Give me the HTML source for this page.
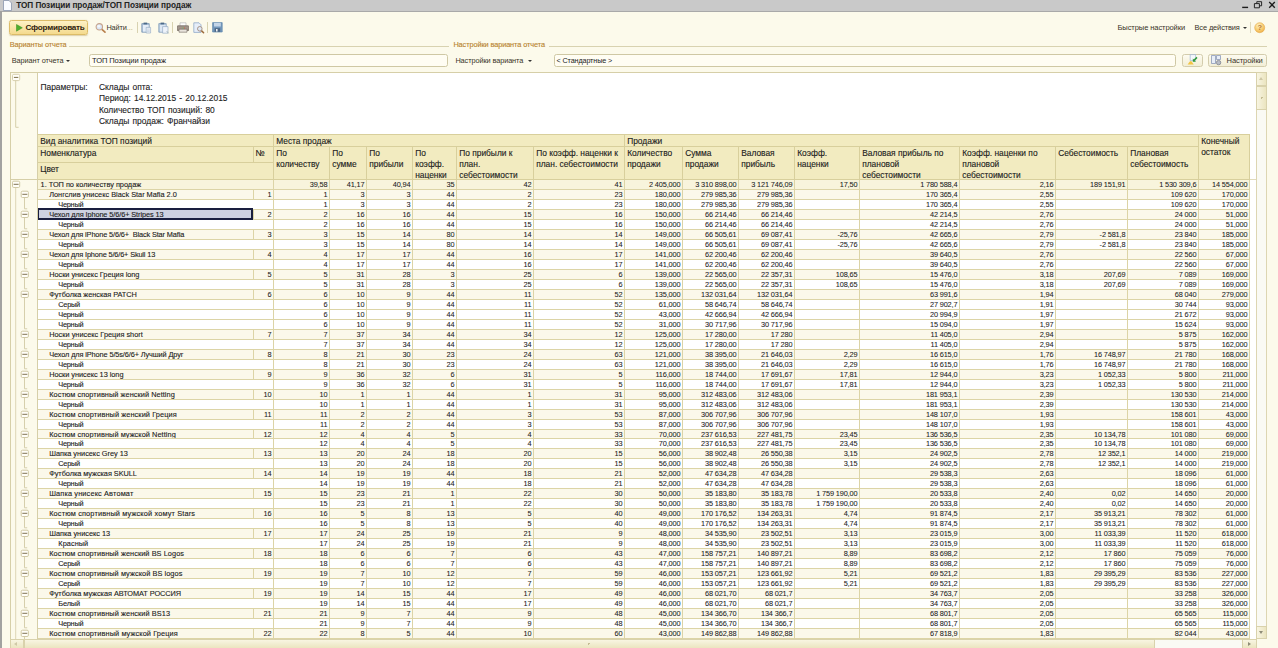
<!DOCTYPE html>
<html lang="ru"><head><meta charset="utf-8"><title>ТОП Позиции продаж</title>
<style>
*{box-sizing:border-box;margin:0;padding:0}
html,body{width:1278px;height:648px;overflow:hidden}
body{background:#fcfaeb;font-family:"Liberation Sans",sans-serif;color:#222;position:relative;font-size:7.1px}
.abs{position:absolute}
#title{position:absolute;left:0;top:0;width:1278px;height:11.5px;background:#c9c9c9;border-bottom:1px solid #a9a9a9}
#title .t{position:absolute;left:16.2px;top:0.5px;font-size:8.2px;font-weight:bold;color:#222;letter-spacing:-0.03px;line-height:10px;white-space:nowrap}
#lb{position:absolute;left:0;top:11px;width:1.8px;height:637px;background:#a2a2a0}
.ui{position:absolute;white-space:nowrap;font-size:7.35px;line-height:9px;color:#3a3428;letter-spacing:-0.1px}
.ui.w{font-size:7.55px}
.grp{color:#b8832e;-webkit-text-stroke:0.12px #b8832e}
.ln{position:absolute;height:1px;background:#d8d2b0}
.inp{position:absolute;height:12.6px;border:1px solid #cfc8a4;border-radius:2.5px;background:#fffdf3}
.btn{position:absolute;border:1px solid #d3ccac;border-radius:2.5px;background:linear-gradient(#fdfbf0,#f2eed6)}
#sheet{position:absolute;left:9.6px;top:72.3px;width:1257.6px;height:576px;background:#fff;border-top:1px solid #d6cfa8;border-left:1px solid #d6cfa8;overflow:hidden}
#tree{position:absolute;left:0;top:0;width:28.4px;height:648px;background:#fcfaeb;border-right:1px solid #d6cfa8}
.par{position:absolute;font-size:8.45px;word-spacing:0.8px;-webkit-text-stroke:0.1px #222;line-height:11.33px;color:#222;white-space:nowrap}
#hdr{position:absolute;left:38px;top:135px;width:1212px;height:45px;background:#f2ebc0}
#hdrt{position:absolute;left:38px;top:134px;width:1212px;height:1px;background:#d8cf9c}
.h{position:absolute;border-right:1px solid #d8cf9c;border-bottom:1px solid #d8cf9c;font-size:8.4px;line-height:11px;padding:1.3px 0 0 2.2px;white-space:nowrap;overflow:hidden;color:#1c1c1c;-webkit-text-stroke:0.12px #1c1c1c}
.row{position:absolute;left:38px;width:1212px;height:10px}
.row.s9,.row.s9 .c{height:9px}
.r0 .c{background:#f8f4dc}
.r1 .c{background:#fbf8ea}
.r2 .c{background:#fff}
.c{position:absolute;top:0;height:10px;border-right:1px solid #dcd4a6;border-bottom:1px solid #dcd4a6;text-align:right;padding-right:1.6px;font-size:7.35px;letter-spacing:-0.14px;line-height:10px;white-space:nowrap;overflow:hidden;color:#1c1c1c;-webkit-text-stroke:0.06px #1c1c1c}
.c.nm{text-align:left;-webkit-text-stroke:0.12px #1c1c1c}
.c.sel{background:#cdd1e0 !important;overflow:visible}
.c.sel::after{content:"";position:absolute;left:0;top:-2px;right:-0.4px;bottom:-1px;border:2px solid #1a1f3f;border-left-width:1.5px;border-right-width:2.2px}
.vl{position:absolute;width:1px;background:#bdb58c}
.hl{position:absolute;height:1px;background:#bdb58c}
.bx{position:absolute;width:7px;height:7.2px;border:1px solid #b9b18a;border-radius:1.2px;background:#fffef6}
.bx i{position:absolute;left:1px;right:1px;top:2.2px;height:1px;background:#7a7660}
#vs{position:absolute;left:1256.4px;top:72.3px;width:10.6px;height:566.5px;background:#fafaf4;border:1px solid #ddd6b2}
#hs{position:absolute;left:9.6px;top:639.2px;width:1247px;height:9px;background:#fafaf4;border-top:1px solid #ddd6b2}
.sb{position:absolute;background:#f3ecc9;border:1px solid #d9d2ac}
.sb.v{background:linear-gradient(90deg,#f8f5e2,#ebe5c0)}
.sb.h{background:linear-gradient(#f8f5e2,#ebe5c0)}
.tri{position:absolute;width:0;height:0}
</style></head><body>
<div id="title"><svg class="abs" style="left:3px;top:0" width="9" height="11" viewBox="0 0 9 11"><path d="M0.5 0.5h5.5l2.5 2.5v7.5h-8z" fill="#fafcff" stroke="#8a97ad" stroke-width="0.8"/></svg><div class="t">ТОП Позиции продаж/ТОП Позиции продаж</div>
<svg class="abs" style="left:1240px;top:0" width="38" height="11" viewBox="0 0 38 11"><path d="M2.2 7.4h5.9" stroke="#1c1c1c" stroke-width="1.4"/><path d="M14.4 3.6h5v4.2h-5z" fill="none" stroke="#1c1c1c" stroke-width="0.95"/><path d="M16.8 3.4v-1.7h4.8v4.1h-2" fill="none" stroke="#1c1c1c" stroke-width="0.95"/><path d="M29.2 2l5.6 5.8M34.8 2l-5.6 5.8" stroke="#1c1c1c" stroke-width="1.35"/></svg>
</div>
<div id="lb"></div>

<!-- toolbar -->
<div class="btn" style="left:9.4px;top:20.2px;width:78.8px;height:14.7px;background:linear-gradient(#fdf1c6,#f4da8e);border-color:#dcbc68;box-shadow:0 0.5px 1.2px rgba(160,130,50,0.35)"></div>
<svg class="abs" style="left:15.5px;top:24px" width="7" height="8" viewBox="0 0 7 8"><path d="M0.5 0.5L6.3 3.8L0.5 7.2z" fill="#4fae2e" stroke="#2e8a1a" stroke-width="0.5"/></svg>
<div class="ui" style="left:25.6px;top:23px;font-weight:bold;font-size:8.1px;color:#2e2210;letter-spacing:-0.22px">Сформировать</div>
<svg class="abs" style="left:94.6px;top:22px" width="12" height="12" viewBox="0 0 12 12"><path d="M6.6 7.2l3.4 3" stroke="#b9814e" stroke-width="1.7" stroke-linecap="round"/><circle cx="4.3" cy="4.8" r="3.2" fill="#dbe7f6" stroke="#c7a48c" stroke-width="1.1"/><circle cx="3.8" cy="4.2" r="1.3" fill="#f4f8fd"/></svg>
<div class="ui" style="left:106.4px;top:23.2px">Найти<span style="color:#b9a36a">...</span></div>
<div class="abs" style="left:136.7px;top:22px;width:1px;height:11px;background:#d8d2b0"></div>
<svg class="abs" style="left:141px;top:21.5px" width="11" height="12" viewBox="0 0 11 12"><path d="M0.8 1.6h7.4v8.6h-7.4z" fill="#b4c8de" stroke="#6a89aa" stroke-width="0.7"/><path d="M2.6 0.6h3.6v1.8h-3.6z" fill="#4d6a88"/><path d="M2 3h5.6v6.6h-5.6z" fill="#e6eef8"/><path d="M5.2 5.4h4.4v5.6h-4.4z" fill="#f6f9fd" stroke="#8aa2bd" stroke-width="0.6"/><path d="M6 7h2.8M6 8.3h2.8M6 9.6h2.8" stroke="#9fb2c8" stroke-width="0.5"/></svg>
<svg class="abs" style="left:157.5px;top:21.5px" width="12" height="12" viewBox="0 0 12 12"><path d="M0.8 1.6h7.4v8.6h-7.4z" fill="#bccfe3" stroke="#7391b0" stroke-width="0.7"/><path d="M2.6 0.6h3.6v1.8h-3.6z" fill="#4d6a88"/><path d="M2 3h5.6v6.6h-5.6z" fill="#dce7f3"/><path d="M4.6 4.6h5.4v6.6h-5.4z" fill="#eef3fa" stroke="#8aa2bd" stroke-width="0.6"/><path d="M8.6 9l2 2.4" stroke="#9aa" stroke-width="0.7"/></svg>
<div class="abs" style="left:171.8px;top:22px;width:1px;height:11px;background:#d8d2b0"></div>
<svg class="abs" style="left:176.5px;top:22px" width="12" height="11" viewBox="0 0 12 11"><path d="M3 0.8h6v3.4h-6z" fill="#fdfdfd" stroke="#a9a9a9" stroke-width="0.6"/><path d="M0.8 3.8h10.4c0.4 0 0.6 0.3 0.6 0.6v4h-11.6v-4c0-0.3 0.2-0.6 0.6-0.6z" fill="#a2958b" stroke="#6e645c" stroke-width="0.7"/><path d="M2 7.2h8v3h-8z" fill="#e9e4dc" stroke="#6e645c" stroke-width="0.6"/><path d="M5.6 6h1" stroke="#5bbf4a" stroke-width="0.8"/><path d="M7 6h1" stroke="#d9503c" stroke-width="0.8"/></svg>
<svg class="abs" style="left:193px;top:21.8px" width="12" height="12" viewBox="0 0 12 12"><path d="M0.8 0.8h5.2l2 2v7.6h-7.2z" fill="#e6eef9" stroke="#8fa8c8" stroke-width="0.8"/><path d="M8.4 8.6l2.2 2.2" stroke="#9c6a3c" stroke-width="1.5" stroke-linecap="round"/><circle cx="6.8" cy="6.8" r="2.3" fill="#dfe9f6" stroke="#a08a7c" stroke-width="0.9"/></svg>
<div class="abs" style="left:207.2px;top:22px;width:1px;height:11px;background:#d8d2b0"></div>
<svg class="abs" style="left:211.6px;top:22.2px" width="11" height="11" viewBox="0 0 11 11"><path d="M0.6 0.6h9.6v9.4h-9.6z" fill="#7397bb" stroke="#5f86ad" stroke-width="0.7"/><path d="M2 0.9h6.8v3.6h-6.8z" fill="#c3d5e8"/><path d="M2.6 6.2h5.6v3.6h-5.6z" fill="#4b6685"/><path d="M4 7h1.6v2.4h-1.6z" fill="#eef2f6"/></svg>

<div class="ui w" style="left:1117.5px;top:23px">Быстрые настройки</div>
<div class="ui w" style="left:1194.5px;top:23px;font-size:7.4px">Все действия</div>
<div class="tri" style="left:1243.2px;top:27px;border-left:2px solid transparent;border-right:2px solid transparent;border-top:2.4px solid #333"></div>
<div class="abs" style="left:1250px;top:22px;width:1px;height:11px;background:#e0dabc"></div>
<svg class="abs" style="left:1254px;top:21.6px" width="12" height="12" viewBox="0 0 12 12"><defs><radialGradient id="hg" cx="0.4" cy="0.3" r="0.75"><stop offset="0" stop-color="#fff2c4"/><stop offset="0.55" stop-color="#f9cf74"/><stop offset="1" stop-color="#efae48"/></radialGradient></defs><circle cx="5.7" cy="5.7" r="5" fill="url(#hg)" stroke="#e2a94e" stroke-width="0.6"/><text x="5.7" y="8.3" font-size="7.4" font-weight="bold" text-anchor="middle" fill="#b47a3c" font-family="Liberation Sans, sans-serif">?</text></svg>

<!-- group captions -->
<div class="ui grp" style="left:9.8px;top:40.2px">Варианты отчета</div>
<div class="ln" style="left:69px;top:45.6px;width:380px"></div>
<div class="ui grp" style="left:453.4px;top:40.2px">Настройки варианта отчета</div>
<div class="ln" style="left:549px;top:45.6px;width:718px"></div>

<div class="ui" style="left:11.8px;top:55.8px">Вариант отчета</div>
<div class="tri" style="left:65.6px;top:59.6px;border-left:2px solid transparent;border-right:2px solid transparent;border-top:2.4px solid #333"></div>
<div class="inp" style="left:89.4px;top:54px;width:358.6px"></div>
<div class="ui w" style="left:92px;top:56px;color:#222">ТОП Позиции продаж</div>
<div class="ui" style="left:455.4px;top:55.8px">Настройки варианта</div>
<div class="tri" style="left:527.6px;top:59.6px;border-left:2px solid transparent;border-right:2px solid transparent;border-top:2.4px solid #333"></div>
<div class="inp" style="left:554.4px;top:54px;width:622px"></div>
<div class="ui" style="left:556.6px;top:56px;color:#222;letter-spacing:-0.12px;font-size:7.2px">&lt; Стандартные &gt;</div>
<div class="btn" style="left:1182px;top:54px;width:20.8px;height:12.6px"></div>
<svg class="abs" style="left:1186.6px;top:54.4px" width="12" height="11" viewBox="0 0 12 11"><path d="M3.2 0.6h5.4v6h-5.4z" fill="#f5f8fc" stroke="#8fa9cc" stroke-width="0.6"/><path d="M10 3.4L6.6 6.8" stroke="#2f9a3c" stroke-width="1.5"/><path d="M5.8 4.6v3.2h3.2z" fill="#2f9a3c"/><path d="M0.6 10.4l2.4-3.2h1.4l2.4 3.2z" fill="#f2c544"/></svg>
<div class="btn" style="left:1208.4px;top:54px;width:58.8px;height:12.6px"></div>
<svg class="abs" style="left:1210.5px;top:55px" width="11" height="11" viewBox="0 0 11 11"><path d="M0.5 0.5h4v8h-4zM5.5 0.5h4v4h-4z" fill="#e8eef7" stroke="#7d8db0" stroke-width="0.7"/><circle cx="7.6" cy="7.6" r="2.2" fill="#b8bcc6" stroke="#767b88" stroke-width="0.7"/></svg>
<div class="ui w" style="left:1226.6px;top:56px">Настройки</div>

<!-- sheet -->
<div id="sheet"></div>
<div class="abs" style="left:10.6px;top:73.3px;width:27.4px;height:575px;background:#fcfaeb;border-right:1px solid #d6cfa8"></div>
<div class="ln" style="left:10.6px;top:179px;width:28px;background:#d6cfa8"></div>
<!-- params group bracket -->
<svg class="abs" style="left:0;top:70px" width="40" height="62" viewBox="0 70 40 62"><path d="M15.7 80V127.3H18.6" stroke="#d6cfac" stroke-width="1" fill="none"/><rect x="12.5" y="74.3" width="7.2" height="6.3" rx="1.3" fill="#fffef8" stroke="#d3cba6" stroke-width="0.9"/><path d="M13.9 77.4h4.4" stroke="#7d6f4a" stroke-width="1"/></svg>

<div class="par" style="left:40.4px;top:82.1px">Параметры:</div>
<div class="par" style="left:98.9px;top:82.1px">Склады опта:<br>Период: 14.12.2015 - 20.12.2015<br>Количество ТОП позиций: 80<br>Склады продаж: Франчайзи</div>

<div id="hdrt"></div>
<div id="hdr">
<div class="h" style="left:0.0px;width:236.0px;top:0.0px;height:12.0px;">Вид аналитика ТОП позиций</div>
<div class="h" style="left:0.0px;width:216.0px;top:12.0px;height:16.0px;">Номенклатура</div>
<div class="h" style="left:216.0px;width:20.0px;top:12.0px;height:16.0px;padding-left:1.2px;font-size:8.8px">№</div>
<div class="h" style="left:0.0px;width:236.0px;top:28.0px;height:17.0px;">Цвет</div>
<div class="h" style="left:236.0px;width:351.0px;top:0.0px;height:12.0px;">Места продаж</div>
<div class="h" style="left:236.0px;width:56.0px;top:12.0px;height:33.0px;">По<br>количеству</div>
<div class="h" style="left:292.0px;width:37.0px;top:12.0px;height:33.0px;">По<br>сумме</div>
<div class="h" style="left:329.0px;width:46.0px;top:12.0px;height:33.0px;">По<br>прибыли</div>
<div class="h" style="left:375.0px;width:44.0px;top:12.0px;height:33.0px;">По<br>коэфф.<br>наценки</div>
<div class="h" style="left:419.0px;width:77.0px;top:12.0px;height:33.0px;">По прибыли к<br>план.<br>себестоимости</div>
<div class="h" style="left:496.0px;width:91.0px;top:12.0px;height:33.0px;">По коэфф. наценки к<br>план. себестоимости</div>
<div class="h" style="left:587.0px;width:58.0px;top:12.0px;height:33.0px;">Количество<br>продажи</div>
<div class="h" style="left:645.0px;width:56.0px;top:12.0px;height:33.0px;">Сумма<br>продажи</div>
<div class="h" style="left:701.0px;width:56.0px;top:12.0px;height:33.0px;">Валовая<br>прибыль</div>
<div class="h" style="left:757.0px;width:65.0px;top:12.0px;height:33.0px;">Коэфф.<br>наценки</div>
<div class="h" style="left:822.0px;width:100.0px;top:12.0px;height:33.0px;">Валовая прибыль по<br>плановой<br>себестоимости</div>
<div class="h" style="left:922.0px;width:96.0px;top:12.0px;height:33.0px;">Коэфф. наценки по<br>плановой<br>себестоимости</div>
<div class="h" style="left:1018.0px;width:72.0px;top:12.0px;height:33.0px;">Себестоимость</div>
<div class="h" style="left:1090.0px;width:71.0px;top:12.0px;height:33.0px;">Плановая<br>себестоимость</div>
<div class="h" style="left:587.0px;width:574.0px;top:0.0px;height:12.0px;">Продажи</div>
<div class="h" style="left:1161.0px;width:51.0px;top:0.0px;height:45.0px;">Конечный<br>остаток</div>
</div>
<div class="row r0" style="top:180px">
<div class="c nm" style="left:0;width:236.0px;padding-left:2.6px;letter-spacing:-0.007px;">1. ТОП по количеству продаж</div>
<div class="c" style="left:236.0px;width:56.0px">39,58</div>
<div class="c" style="left:292.0px;width:37.0px">41,17</div>
<div class="c" style="left:329.0px;width:46.0px">40,94</div>
<div class="c" style="left:375.0px;width:44.0px">35</div>
<div class="c" style="left:419.0px;width:77.0px">42</div>
<div class="c" style="left:496.0px;width:91.0px">41</div>
<div class="c" style="left:587.0px;width:58.0px">2 405,000</div>
<div class="c" style="left:645.0px;width:56.0px">3 310 898,00</div>
<div class="c" style="left:701.0px;width:56.0px">3 121 746,09</div>
<div class="c" style="left:757.0px;width:65.0px">17,50</div>
<div class="c" style="left:822.0px;width:100.0px">1 780 588,4</div>
<div class="c" style="left:922.0px;width:96.0px">2,16</div>
<div class="c" style="left:1018.0px;width:72.0px">189 151,91</div>
<div class="c" style="left:1090.0px;width:71.0px">1 530 309,6</div>
<div class="c" style="left:1161.0px;width:51.0px">14 554,000</div>
</div>
<div class="row r1" style="top:190px">
<div class="c nm" style="left:0;width:216.0px;padding-left:11.2px;letter-spacing:-0.005px;">Лонгслив унисекс Black Star Mafia 2.0</div>
<div class="c" style="left:216.0px;width:20.0px">1</div>
<div class="c" style="left:236.0px;width:56.0px">1</div>
<div class="c" style="left:292.0px;width:37.0px">3</div>
<div class="c" style="left:329.0px;width:46.0px">3</div>
<div class="c" style="left:375.0px;width:44.0px">44</div>
<div class="c" style="left:419.0px;width:77.0px">2</div>
<div class="c" style="left:496.0px;width:91.0px">23</div>
<div class="c" style="left:587.0px;width:58.0px">180,000</div>
<div class="c" style="left:645.0px;width:56.0px">279 985,36</div>
<div class="c" style="left:701.0px;width:56.0px">279 985,36</div>
<div class="c" style="left:757.0px;width:65.0px"></div>
<div class="c" style="left:822.0px;width:100.0px">170 365,4</div>
<div class="c" style="left:922.0px;width:96.0px">2,55</div>
<div class="c" style="left:1018.0px;width:72.0px"></div>
<div class="c" style="left:1090.0px;width:71.0px">109 620</div>
<div class="c" style="left:1161.0px;width:51.0px">170,000</div>
</div>
<div class="row r2" style="top:200px">
<div class="c nm" style="left:0;width:236.0px;padding-left:20.3px;letter-spacing:-0.253px;">Черный</div>
<div class="c" style="left:236.0px;width:56.0px">1</div>
<div class="c" style="left:292.0px;width:37.0px">3</div>
<div class="c" style="left:329.0px;width:46.0px">3</div>
<div class="c" style="left:375.0px;width:44.0px">44</div>
<div class="c" style="left:419.0px;width:77.0px">2</div>
<div class="c" style="left:496.0px;width:91.0px">23</div>
<div class="c" style="left:587.0px;width:58.0px">180,000</div>
<div class="c" style="left:645.0px;width:56.0px">279 985,36</div>
<div class="c" style="left:701.0px;width:56.0px">279 985,36</div>
<div class="c" style="left:757.0px;width:65.0px"></div>
<div class="c" style="left:822.0px;width:100.0px">170 365,4</div>
<div class="c" style="left:922.0px;width:96.0px">2,55</div>
<div class="c" style="left:1018.0px;width:72.0px"></div>
<div class="c" style="left:1090.0px;width:71.0px">109 620</div>
<div class="c" style="left:1161.0px;width:51.0px">170,000</div>
</div>
<div class="row r1" style="top:210px">
<div class="c nm sel" style="left:0;width:216.0px;padding-left:11.2px;letter-spacing:-0.096px;">Чехол для Iphone 5/6/6+ Stripes 13</div>
<div class="c" style="left:216.0px;width:20.0px">2</div>
<div class="c" style="left:236.0px;width:56.0px">2</div>
<div class="c" style="left:292.0px;width:37.0px">16</div>
<div class="c" style="left:329.0px;width:46.0px">16</div>
<div class="c" style="left:375.0px;width:44.0px">44</div>
<div class="c" style="left:419.0px;width:77.0px">15</div>
<div class="c" style="left:496.0px;width:91.0px">16</div>
<div class="c" style="left:587.0px;width:58.0px">150,000</div>
<div class="c" style="left:645.0px;width:56.0px">66 214,46</div>
<div class="c" style="left:701.0px;width:56.0px">66 214,46</div>
<div class="c" style="left:757.0px;width:65.0px"></div>
<div class="c" style="left:822.0px;width:100.0px">42 214,5</div>
<div class="c" style="left:922.0px;width:96.0px">2,76</div>
<div class="c" style="left:1018.0px;width:72.0px"></div>
<div class="c" style="left:1090.0px;width:71.0px">24 000</div>
<div class="c" style="left:1161.0px;width:51.0px">51,000</div>
</div>
<div class="row r2" style="top:220px">
<div class="c nm" style="left:0;width:236.0px;padding-left:20.3px;letter-spacing:-0.253px;">Черный</div>
<div class="c" style="left:236.0px;width:56.0px">2</div>
<div class="c" style="left:292.0px;width:37.0px">16</div>
<div class="c" style="left:329.0px;width:46.0px">16</div>
<div class="c" style="left:375.0px;width:44.0px">44</div>
<div class="c" style="left:419.0px;width:77.0px">15</div>
<div class="c" style="left:496.0px;width:91.0px">16</div>
<div class="c" style="left:587.0px;width:58.0px">150,000</div>
<div class="c" style="left:645.0px;width:56.0px">66 214,46</div>
<div class="c" style="left:701.0px;width:56.0px">66 214,46</div>
<div class="c" style="left:757.0px;width:65.0px"></div>
<div class="c" style="left:822.0px;width:100.0px">42 214,5</div>
<div class="c" style="left:922.0px;width:96.0px">2,76</div>
<div class="c" style="left:1018.0px;width:72.0px"></div>
<div class="c" style="left:1090.0px;width:71.0px">24 000</div>
<div class="c" style="left:1161.0px;width:51.0px">51,000</div>
</div>
<div class="row r1" style="top:230px">
<div class="c nm" style="left:0;width:216.0px;padding-left:11.2px;letter-spacing:-0.132px;">Чехол для iPhone 5/6/6+&nbsp; Black Star Mafia</div>
<div class="c" style="left:216.0px;width:20.0px">3</div>
<div class="c" style="left:236.0px;width:56.0px">3</div>
<div class="c" style="left:292.0px;width:37.0px">15</div>
<div class="c" style="left:329.0px;width:46.0px">14</div>
<div class="c" style="left:375.0px;width:44.0px">80</div>
<div class="c" style="left:419.0px;width:77.0px">14</div>
<div class="c" style="left:496.0px;width:91.0px">14</div>
<div class="c" style="left:587.0px;width:58.0px">149,000</div>
<div class="c" style="left:645.0px;width:56.0px">66 505,61</div>
<div class="c" style="left:701.0px;width:56.0px">69 087,41</div>
<div class="c" style="left:757.0px;width:65.0px">-25,76</div>
<div class="c" style="left:822.0px;width:100.0px">42 665,6</div>
<div class="c" style="left:922.0px;width:96.0px">2,79</div>
<div class="c" style="left:1018.0px;width:72.0px">-2 581,8</div>
<div class="c" style="left:1090.0px;width:71.0px">23 840</div>
<div class="c" style="left:1161.0px;width:51.0px">185,000</div>
</div>
<div class="row r2" style="top:240px">
<div class="c nm" style="left:0;width:236.0px;padding-left:20.3px;letter-spacing:-0.253px;">Черный</div>
<div class="c" style="left:236.0px;width:56.0px">3</div>
<div class="c" style="left:292.0px;width:37.0px">15</div>
<div class="c" style="left:329.0px;width:46.0px">14</div>
<div class="c" style="left:375.0px;width:44.0px">80</div>
<div class="c" style="left:419.0px;width:77.0px">14</div>
<div class="c" style="left:496.0px;width:91.0px">14</div>
<div class="c" style="left:587.0px;width:58.0px">149,000</div>
<div class="c" style="left:645.0px;width:56.0px">66 505,61</div>
<div class="c" style="left:701.0px;width:56.0px">69 087,41</div>
<div class="c" style="left:757.0px;width:65.0px">-25,76</div>
<div class="c" style="left:822.0px;width:100.0px">42 665,6</div>
<div class="c" style="left:922.0px;width:96.0px">2,79</div>
<div class="c" style="left:1018.0px;width:72.0px">-2 581,8</div>
<div class="c" style="left:1090.0px;width:71.0px">23 840</div>
<div class="c" style="left:1161.0px;width:51.0px">185,000</div>
</div>
<div class="row r1" style="top:250px">
<div class="c nm" style="left:0;width:216.0px;padding-left:11.2px;letter-spacing:-0.144px;">Чехол для Iphone 5/6/6+ Skull 13</div>
<div class="c" style="left:216.0px;width:20.0px">4</div>
<div class="c" style="left:236.0px;width:56.0px">4</div>
<div class="c" style="left:292.0px;width:37.0px">17</div>
<div class="c" style="left:329.0px;width:46.0px">17</div>
<div class="c" style="left:375.0px;width:44.0px">44</div>
<div class="c" style="left:419.0px;width:77.0px">16</div>
<div class="c" style="left:496.0px;width:91.0px">17</div>
<div class="c" style="left:587.0px;width:58.0px">141,000</div>
<div class="c" style="left:645.0px;width:56.0px">62 200,46</div>
<div class="c" style="left:701.0px;width:56.0px">62 200,46</div>
<div class="c" style="left:757.0px;width:65.0px"></div>
<div class="c" style="left:822.0px;width:100.0px">39 640,5</div>
<div class="c" style="left:922.0px;width:96.0px">2,76</div>
<div class="c" style="left:1018.0px;width:72.0px"></div>
<div class="c" style="left:1090.0px;width:71.0px">22 560</div>
<div class="c" style="left:1161.0px;width:51.0px">67,000</div>
</div>
<div class="row r2" style="top:260px">
<div class="c nm" style="left:0;width:236.0px;padding-left:20.3px;letter-spacing:-0.253px;">Черный</div>
<div class="c" style="left:236.0px;width:56.0px">4</div>
<div class="c" style="left:292.0px;width:37.0px">17</div>
<div class="c" style="left:329.0px;width:46.0px">17</div>
<div class="c" style="left:375.0px;width:44.0px">44</div>
<div class="c" style="left:419.0px;width:77.0px">16</div>
<div class="c" style="left:496.0px;width:91.0px">17</div>
<div class="c" style="left:587.0px;width:58.0px">141,000</div>
<div class="c" style="left:645.0px;width:56.0px">62 200,46</div>
<div class="c" style="left:701.0px;width:56.0px">62 200,46</div>
<div class="c" style="left:757.0px;width:65.0px"></div>
<div class="c" style="left:822.0px;width:100.0px">39 640,5</div>
<div class="c" style="left:922.0px;width:96.0px">2,76</div>
<div class="c" style="left:1018.0px;width:72.0px"></div>
<div class="c" style="left:1090.0px;width:71.0px">22 560</div>
<div class="c" style="left:1161.0px;width:51.0px">67,000</div>
</div>
<div class="row r1" style="top:270px">
<div class="c nm" style="left:0;width:216.0px;padding-left:11.2px;letter-spacing:-0.029px;">Носки унисекс Греция long</div>
<div class="c" style="left:216.0px;width:20.0px">5</div>
<div class="c" style="left:236.0px;width:56.0px">5</div>
<div class="c" style="left:292.0px;width:37.0px">31</div>
<div class="c" style="left:329.0px;width:46.0px">28</div>
<div class="c" style="left:375.0px;width:44.0px">3</div>
<div class="c" style="left:419.0px;width:77.0px">25</div>
<div class="c" style="left:496.0px;width:91.0px">6</div>
<div class="c" style="left:587.0px;width:58.0px">139,000</div>
<div class="c" style="left:645.0px;width:56.0px">22 565,00</div>
<div class="c" style="left:701.0px;width:56.0px">22 357,31</div>
<div class="c" style="left:757.0px;width:65.0px">108,65</div>
<div class="c" style="left:822.0px;width:100.0px">15 476,0</div>
<div class="c" style="left:922.0px;width:96.0px">3,18</div>
<div class="c" style="left:1018.0px;width:72.0px">207,69</div>
<div class="c" style="left:1090.0px;width:71.0px">7 089</div>
<div class="c" style="left:1161.0px;width:51.0px">169,000</div>
</div>
<div class="row r2" style="top:280px">
<div class="c nm" style="left:0;width:236.0px;padding-left:20.3px;letter-spacing:-0.253px;">Черный</div>
<div class="c" style="left:236.0px;width:56.0px">5</div>
<div class="c" style="left:292.0px;width:37.0px">31</div>
<div class="c" style="left:329.0px;width:46.0px">28</div>
<div class="c" style="left:375.0px;width:44.0px">3</div>
<div class="c" style="left:419.0px;width:77.0px">25</div>
<div class="c" style="left:496.0px;width:91.0px">6</div>
<div class="c" style="left:587.0px;width:58.0px">139,000</div>
<div class="c" style="left:645.0px;width:56.0px">22 565,00</div>
<div class="c" style="left:701.0px;width:56.0px">22 357,31</div>
<div class="c" style="left:757.0px;width:65.0px">108,65</div>
<div class="c" style="left:822.0px;width:100.0px">15 476,0</div>
<div class="c" style="left:922.0px;width:96.0px">3,18</div>
<div class="c" style="left:1018.0px;width:72.0px">207,69</div>
<div class="c" style="left:1090.0px;width:71.0px">7 089</div>
<div class="c" style="left:1161.0px;width:51.0px">169,000</div>
</div>
<div class="row r1" style="top:290px">
<div class="c nm" style="left:0;width:216.0px;padding-left:11.2px;letter-spacing:-0.041px;">Футболка женская PATCH</div>
<div class="c" style="left:216.0px;width:20.0px">6</div>
<div class="c" style="left:236.0px;width:56.0px">6</div>
<div class="c" style="left:292.0px;width:37.0px">10</div>
<div class="c" style="left:329.0px;width:46.0px">9</div>
<div class="c" style="left:375.0px;width:44.0px">44</div>
<div class="c" style="left:419.0px;width:77.0px">11</div>
<div class="c" style="left:496.0px;width:91.0px">52</div>
<div class="c" style="left:587.0px;width:58.0px">135,000</div>
<div class="c" style="left:645.0px;width:56.0px">132 031,64</div>
<div class="c" style="left:701.0px;width:56.0px">132 031,64</div>
<div class="c" style="left:757.0px;width:65.0px"></div>
<div class="c" style="left:822.0px;width:100.0px">63 991,6</div>
<div class="c" style="left:922.0px;width:96.0px">1,94</div>
<div class="c" style="left:1018.0px;width:72.0px"></div>
<div class="c" style="left:1090.0px;width:71.0px">68 040</div>
<div class="c" style="left:1161.0px;width:51.0px">279,000</div>
</div>
<div class="row r2" style="top:300px">
<div class="c nm" style="left:0;width:236.0px;padding-left:20.3px;letter-spacing:-0.234px;">Серый</div>
<div class="c" style="left:236.0px;width:56.0px">6</div>
<div class="c" style="left:292.0px;width:37.0px">10</div>
<div class="c" style="left:329.0px;width:46.0px">9</div>
<div class="c" style="left:375.0px;width:44.0px">44</div>
<div class="c" style="left:419.0px;width:77.0px">11</div>
<div class="c" style="left:496.0px;width:91.0px">52</div>
<div class="c" style="left:587.0px;width:58.0px">61,000</div>
<div class="c" style="left:645.0px;width:56.0px">58 646,74</div>
<div class="c" style="left:701.0px;width:56.0px">58 646,74</div>
<div class="c" style="left:757.0px;width:65.0px"></div>
<div class="c" style="left:822.0px;width:100.0px">27 902,7</div>
<div class="c" style="left:922.0px;width:96.0px">1,91</div>
<div class="c" style="left:1018.0px;width:72.0px"></div>
<div class="c" style="left:1090.0px;width:71.0px">30 744</div>
<div class="c" style="left:1161.0px;width:51.0px">93,000</div>
</div>
<div class="row r2" style="top:310px">
<div class="c nm" style="left:0;width:236.0px;padding-left:20.3px;letter-spacing:-0.253px;">Черный</div>
<div class="c" style="left:236.0px;width:56.0px">6</div>
<div class="c" style="left:292.0px;width:37.0px">10</div>
<div class="c" style="left:329.0px;width:46.0px">9</div>
<div class="c" style="left:375.0px;width:44.0px">44</div>
<div class="c" style="left:419.0px;width:77.0px">11</div>
<div class="c" style="left:496.0px;width:91.0px">52</div>
<div class="c" style="left:587.0px;width:58.0px">43,000</div>
<div class="c" style="left:645.0px;width:56.0px">42 666,94</div>
<div class="c" style="left:701.0px;width:56.0px">42 666,94</div>
<div class="c" style="left:757.0px;width:65.0px"></div>
<div class="c" style="left:822.0px;width:100.0px">20 994,9</div>
<div class="c" style="left:922.0px;width:96.0px">1,97</div>
<div class="c" style="left:1018.0px;width:72.0px"></div>
<div class="c" style="left:1090.0px;width:71.0px">21 672</div>
<div class="c" style="left:1161.0px;width:51.0px">93,000</div>
</div>
<div class="row r2" style="top:320px">
<div class="c nm" style="left:0;width:236.0px;padding-left:20.3px;letter-spacing:-0.253px;">Черный</div>
<div class="c" style="left:236.0px;width:56.0px">6</div>
<div class="c" style="left:292.0px;width:37.0px">10</div>
<div class="c" style="left:329.0px;width:46.0px">9</div>
<div class="c" style="left:375.0px;width:44.0px">44</div>
<div class="c" style="left:419.0px;width:77.0px">11</div>
<div class="c" style="left:496.0px;width:91.0px">52</div>
<div class="c" style="left:587.0px;width:58.0px">31,000</div>
<div class="c" style="left:645.0px;width:56.0px">30 717,96</div>
<div class="c" style="left:701.0px;width:56.0px">30 717,96</div>
<div class="c" style="left:757.0px;width:65.0px"></div>
<div class="c" style="left:822.0px;width:100.0px">15 094,0</div>
<div class="c" style="left:922.0px;width:96.0px">1,97</div>
<div class="c" style="left:1018.0px;width:72.0px"></div>
<div class="c" style="left:1090.0px;width:71.0px">15 624</div>
<div class="c" style="left:1161.0px;width:51.0px">93,000</div>
</div>
<div class="row r1" style="top:330px">
<div class="c nm" style="left:0;width:216.0px;padding-left:11.2px;letter-spacing:0.009px;">Носки унисекс Греция short</div>
<div class="c" style="left:216.0px;width:20.0px">7</div>
<div class="c" style="left:236.0px;width:56.0px">7</div>
<div class="c" style="left:292.0px;width:37.0px">37</div>
<div class="c" style="left:329.0px;width:46.0px">34</div>
<div class="c" style="left:375.0px;width:44.0px">44</div>
<div class="c" style="left:419.0px;width:77.0px">34</div>
<div class="c" style="left:496.0px;width:91.0px">12</div>
<div class="c" style="left:587.0px;width:58.0px">125,000</div>
<div class="c" style="left:645.0px;width:56.0px">17 280,00</div>
<div class="c" style="left:701.0px;width:56.0px">17 280</div>
<div class="c" style="left:757.0px;width:65.0px"></div>
<div class="c" style="left:822.0px;width:100.0px">11 405,0</div>
<div class="c" style="left:922.0px;width:96.0px">2,94</div>
<div class="c" style="left:1018.0px;width:72.0px"></div>
<div class="c" style="left:1090.0px;width:71.0px">5 875</div>
<div class="c" style="left:1161.0px;width:51.0px">162,000</div>
</div>
<div class="row r2" style="top:340px">
<div class="c nm" style="left:0;width:236.0px;padding-left:20.3px;letter-spacing:-0.253px;">Черный</div>
<div class="c" style="left:236.0px;width:56.0px">7</div>
<div class="c" style="left:292.0px;width:37.0px">37</div>
<div class="c" style="left:329.0px;width:46.0px">34</div>
<div class="c" style="left:375.0px;width:44.0px">44</div>
<div class="c" style="left:419.0px;width:77.0px">34</div>
<div class="c" style="left:496.0px;width:91.0px">12</div>
<div class="c" style="left:587.0px;width:58.0px">125,000</div>
<div class="c" style="left:645.0px;width:56.0px">17 280,00</div>
<div class="c" style="left:701.0px;width:56.0px">17 280</div>
<div class="c" style="left:757.0px;width:65.0px"></div>
<div class="c" style="left:822.0px;width:100.0px">11 405,0</div>
<div class="c" style="left:922.0px;width:96.0px">2,94</div>
<div class="c" style="left:1018.0px;width:72.0px"></div>
<div class="c" style="left:1090.0px;width:71.0px">5 875</div>
<div class="c" style="left:1161.0px;width:51.0px">162,000</div>
</div>
<div class="row r1" style="top:350px">
<div class="c nm" style="left:0;width:216.0px;padding-left:11.2px;letter-spacing:-0.113px;">Чехол для iPhone 5/5s/6/6+ Лучший Друг</div>
<div class="c" style="left:216.0px;width:20.0px">8</div>
<div class="c" style="left:236.0px;width:56.0px">8</div>
<div class="c" style="left:292.0px;width:37.0px">21</div>
<div class="c" style="left:329.0px;width:46.0px">30</div>
<div class="c" style="left:375.0px;width:44.0px">23</div>
<div class="c" style="left:419.0px;width:77.0px">24</div>
<div class="c" style="left:496.0px;width:91.0px">63</div>
<div class="c" style="left:587.0px;width:58.0px">121,000</div>
<div class="c" style="left:645.0px;width:56.0px">38 395,00</div>
<div class="c" style="left:701.0px;width:56.0px">21 646,03</div>
<div class="c" style="left:757.0px;width:65.0px">2,29</div>
<div class="c" style="left:822.0px;width:100.0px">16 615,0</div>
<div class="c" style="left:922.0px;width:96.0px">1,76</div>
<div class="c" style="left:1018.0px;width:72.0px">16 748,97</div>
<div class="c" style="left:1090.0px;width:71.0px">21 780</div>
<div class="c" style="left:1161.0px;width:51.0px">168,000</div>
</div>
<div class="row r2" style="top:360px">
<div class="c nm" style="left:0;width:236.0px;padding-left:20.3px;letter-spacing:-0.253px;">Черный</div>
<div class="c" style="left:236.0px;width:56.0px">8</div>
<div class="c" style="left:292.0px;width:37.0px">21</div>
<div class="c" style="left:329.0px;width:46.0px">30</div>
<div class="c" style="left:375.0px;width:44.0px">23</div>
<div class="c" style="left:419.0px;width:77.0px">24</div>
<div class="c" style="left:496.0px;width:91.0px">63</div>
<div class="c" style="left:587.0px;width:58.0px">121,000</div>
<div class="c" style="left:645.0px;width:56.0px">38 395,00</div>
<div class="c" style="left:701.0px;width:56.0px">21 646,03</div>
<div class="c" style="left:757.0px;width:65.0px">2,29</div>
<div class="c" style="left:822.0px;width:100.0px">16 615,0</div>
<div class="c" style="left:922.0px;width:96.0px">1,76</div>
<div class="c" style="left:1018.0px;width:72.0px">16 748,97</div>
<div class="c" style="left:1090.0px;width:71.0px">21 780</div>
<div class="c" style="left:1161.0px;width:51.0px">168,000</div>
</div>
<div class="row r1" style="top:370px">
<div class="c nm" style="left:0;width:216.0px;padding-left:11.2px;letter-spacing:-0.041px;">Носки унисекс 13 long</div>
<div class="c" style="left:216.0px;width:20.0px">9</div>
<div class="c" style="left:236.0px;width:56.0px">9</div>
<div class="c" style="left:292.0px;width:37.0px">36</div>
<div class="c" style="left:329.0px;width:46.0px">32</div>
<div class="c" style="left:375.0px;width:44.0px">6</div>
<div class="c" style="left:419.0px;width:77.0px">31</div>
<div class="c" style="left:496.0px;width:91.0px">5</div>
<div class="c" style="left:587.0px;width:58.0px">116,000</div>
<div class="c" style="left:645.0px;width:56.0px">18 744,00</div>
<div class="c" style="left:701.0px;width:56.0px">17 691,67</div>
<div class="c" style="left:757.0px;width:65.0px">17,81</div>
<div class="c" style="left:822.0px;width:100.0px">12 944,0</div>
<div class="c" style="left:922.0px;width:96.0px">3,23</div>
<div class="c" style="left:1018.0px;width:72.0px">1 052,33</div>
<div class="c" style="left:1090.0px;width:71.0px">5 800</div>
<div class="c" style="left:1161.0px;width:51.0px">211,000</div>
</div>
<div class="row r2" style="top:380px">
<div class="c nm" style="left:0;width:236.0px;padding-left:20.3px;letter-spacing:-0.253px;">Черный</div>
<div class="c" style="left:236.0px;width:56.0px">9</div>
<div class="c" style="left:292.0px;width:37.0px">36</div>
<div class="c" style="left:329.0px;width:46.0px">32</div>
<div class="c" style="left:375.0px;width:44.0px">6</div>
<div class="c" style="left:419.0px;width:77.0px">31</div>
<div class="c" style="left:496.0px;width:91.0px">5</div>
<div class="c" style="left:587.0px;width:58.0px">116,000</div>
<div class="c" style="left:645.0px;width:56.0px">18 744,00</div>
<div class="c" style="left:701.0px;width:56.0px">17 691,67</div>
<div class="c" style="left:757.0px;width:65.0px">17,81</div>
<div class="c" style="left:822.0px;width:100.0px">12 944,0</div>
<div class="c" style="left:922.0px;width:96.0px">3,23</div>
<div class="c" style="left:1018.0px;width:72.0px">1 052,33</div>
<div class="c" style="left:1090.0px;width:71.0px">5 800</div>
<div class="c" style="left:1161.0px;width:51.0px">211,000</div>
</div>
<div class="row r1" style="top:390px">
<div class="c nm" style="left:0;width:216.0px;padding-left:11.2px;letter-spacing:0.053px;">Костюм спортивный женский Netting</div>
<div class="c" style="left:216.0px;width:20.0px">10</div>
<div class="c" style="left:236.0px;width:56.0px">10</div>
<div class="c" style="left:292.0px;width:37.0px">1</div>
<div class="c" style="left:329.0px;width:46.0px">1</div>
<div class="c" style="left:375.0px;width:44.0px">44</div>
<div class="c" style="left:419.0px;width:77.0px">1</div>
<div class="c" style="left:496.0px;width:91.0px">31</div>
<div class="c" style="left:587.0px;width:58.0px">95,000</div>
<div class="c" style="left:645.0px;width:56.0px">312 483,06</div>
<div class="c" style="left:701.0px;width:56.0px">312 483,06</div>
<div class="c" style="left:757.0px;width:65.0px"></div>
<div class="c" style="left:822.0px;width:100.0px">181 953,1</div>
<div class="c" style="left:922.0px;width:96.0px">2,39</div>
<div class="c" style="left:1018.0px;width:72.0px"></div>
<div class="c" style="left:1090.0px;width:71.0px">130 530</div>
<div class="c" style="left:1161.0px;width:51.0px">214,000</div>
</div>
<div class="row r2" style="top:400px">
<div class="c nm" style="left:0;width:236.0px;padding-left:20.3px;letter-spacing:-0.253px;">Черный</div>
<div class="c" style="left:236.0px;width:56.0px">10</div>
<div class="c" style="left:292.0px;width:37.0px">1</div>
<div class="c" style="left:329.0px;width:46.0px">1</div>
<div class="c" style="left:375.0px;width:44.0px">44</div>
<div class="c" style="left:419.0px;width:77.0px">1</div>
<div class="c" style="left:496.0px;width:91.0px">31</div>
<div class="c" style="left:587.0px;width:58.0px">95,000</div>
<div class="c" style="left:645.0px;width:56.0px">312 483,06</div>
<div class="c" style="left:701.0px;width:56.0px">312 483,06</div>
<div class="c" style="left:757.0px;width:65.0px"></div>
<div class="c" style="left:822.0px;width:100.0px">181 953,1</div>
<div class="c" style="left:922.0px;width:96.0px">2,39</div>
<div class="c" style="left:1018.0px;width:72.0px"></div>
<div class="c" style="left:1090.0px;width:71.0px">130 530</div>
<div class="c" style="left:1161.0px;width:51.0px">214,000</div>
</div>
<div class="row r1" style="top:410px">
<div class="c nm" style="left:0;width:216.0px;padding-left:11.2px;letter-spacing:0.093px;">Костюм спортивный женский Греция</div>
<div class="c" style="left:216.0px;width:20.0px">11</div>
<div class="c" style="left:236.0px;width:56.0px">11</div>
<div class="c" style="left:292.0px;width:37.0px">2</div>
<div class="c" style="left:329.0px;width:46.0px">2</div>
<div class="c" style="left:375.0px;width:44.0px">44</div>
<div class="c" style="left:419.0px;width:77.0px">3</div>
<div class="c" style="left:496.0px;width:91.0px">53</div>
<div class="c" style="left:587.0px;width:58.0px">87,000</div>
<div class="c" style="left:645.0px;width:56.0px">306 707,96</div>
<div class="c" style="left:701.0px;width:56.0px">306 707,96</div>
<div class="c" style="left:757.0px;width:65.0px"></div>
<div class="c" style="left:822.0px;width:100.0px">148 107,0</div>
<div class="c" style="left:922.0px;width:96.0px">1,93</div>
<div class="c" style="left:1018.0px;width:72.0px"></div>
<div class="c" style="left:1090.0px;width:71.0px">158 601</div>
<div class="c" style="left:1161.0px;width:51.0px">43,000</div>
</div>
<div class="row r2" style="top:420px">
<div class="c nm" style="left:0;width:236.0px;padding-left:20.3px;letter-spacing:-0.253px;">Черный</div>
<div class="c" style="left:236.0px;width:56.0px">11</div>
<div class="c" style="left:292.0px;width:37.0px">2</div>
<div class="c" style="left:329.0px;width:46.0px">2</div>
<div class="c" style="left:375.0px;width:44.0px">44</div>
<div class="c" style="left:419.0px;width:77.0px">3</div>
<div class="c" style="left:496.0px;width:91.0px">53</div>
<div class="c" style="left:587.0px;width:58.0px">87,000</div>
<div class="c" style="left:645.0px;width:56.0px">306 707,96</div>
<div class="c" style="left:701.0px;width:56.0px">306 707,96</div>
<div class="c" style="left:757.0px;width:65.0px"></div>
<div class="c" style="left:822.0px;width:100.0px">148 107,0</div>
<div class="c" style="left:922.0px;width:96.0px">1,93</div>
<div class="c" style="left:1018.0px;width:72.0px"></div>
<div class="c" style="left:1090.0px;width:71.0px">158 601</div>
<div class="c" style="left:1161.0px;width:51.0px">43,000</div>
</div>
<div class="row r1 s9" style="top:430px">
<div class="c nm" style="left:0;width:216.0px;padding-left:11.2px;letter-spacing:0.058px;">Костюм спортивный мужской Netting</div>
<div class="c" style="left:216.0px;width:20.0px">12</div>
<div class="c" style="left:236.0px;width:56.0px">12</div>
<div class="c" style="left:292.0px;width:37.0px">4</div>
<div class="c" style="left:329.0px;width:46.0px">4</div>
<div class="c" style="left:375.0px;width:44.0px">5</div>
<div class="c" style="left:419.0px;width:77.0px">4</div>
<div class="c" style="left:496.0px;width:91.0px">33</div>
<div class="c" style="left:587.0px;width:58.0px">70,000</div>
<div class="c" style="left:645.0px;width:56.0px">237 616,53</div>
<div class="c" style="left:701.0px;width:56.0px">227 481,75</div>
<div class="c" style="left:757.0px;width:65.0px">23,45</div>
<div class="c" style="left:822.0px;width:100.0px">136 536,5</div>
<div class="c" style="left:922.0px;width:96.0px">2,35</div>
<div class="c" style="left:1018.0px;width:72.0px">10 134,78</div>
<div class="c" style="left:1090.0px;width:71.0px">101 080</div>
<div class="c" style="left:1161.0px;width:51.0px">69,000</div>
</div>
<div class="row r2" style="top:439px">
<div class="c nm" style="left:0;width:236.0px;padding-left:20.3px;letter-spacing:-0.253px;">Черный</div>
<div class="c" style="left:236.0px;width:56.0px">12</div>
<div class="c" style="left:292.0px;width:37.0px">4</div>
<div class="c" style="left:329.0px;width:46.0px">4</div>
<div class="c" style="left:375.0px;width:44.0px">5</div>
<div class="c" style="left:419.0px;width:77.0px">4</div>
<div class="c" style="left:496.0px;width:91.0px">33</div>
<div class="c" style="left:587.0px;width:58.0px">70,000</div>
<div class="c" style="left:645.0px;width:56.0px">237 616,53</div>
<div class="c" style="left:701.0px;width:56.0px">227 481,75</div>
<div class="c" style="left:757.0px;width:65.0px">23,45</div>
<div class="c" style="left:822.0px;width:100.0px">136 536,5</div>
<div class="c" style="left:922.0px;width:96.0px">2,35</div>
<div class="c" style="left:1018.0px;width:72.0px">10 134,78</div>
<div class="c" style="left:1090.0px;width:71.0px">101 080</div>
<div class="c" style="left:1161.0px;width:51.0px">69,000</div>
</div>
<div class="row r1" style="top:449px">
<div class="c nm" style="left:0;width:216.0px;padding-left:11.2px;letter-spacing:-0.018px;">Шапка унисекс Grey 13</div>
<div class="c" style="left:216.0px;width:20.0px">13</div>
<div class="c" style="left:236.0px;width:56.0px">13</div>
<div class="c" style="left:292.0px;width:37.0px">20</div>
<div class="c" style="left:329.0px;width:46.0px">24</div>
<div class="c" style="left:375.0px;width:44.0px">18</div>
<div class="c" style="left:419.0px;width:77.0px">20</div>
<div class="c" style="left:496.0px;width:91.0px">15</div>
<div class="c" style="left:587.0px;width:58.0px">56,000</div>
<div class="c" style="left:645.0px;width:56.0px">38 902,48</div>
<div class="c" style="left:701.0px;width:56.0px">26 550,38</div>
<div class="c" style="left:757.0px;width:65.0px">3,15</div>
<div class="c" style="left:822.0px;width:100.0px">24 902,5</div>
<div class="c" style="left:922.0px;width:96.0px">2,78</div>
<div class="c" style="left:1018.0px;width:72.0px">12 352,1</div>
<div class="c" style="left:1090.0px;width:71.0px">14 000</div>
<div class="c" style="left:1161.0px;width:51.0px">219,000</div>
</div>
<div class="row r2" style="top:459px">
<div class="c nm" style="left:0;width:236.0px;padding-left:20.3px;letter-spacing:-0.234px;">Серый</div>
<div class="c" style="left:236.0px;width:56.0px">13</div>
<div class="c" style="left:292.0px;width:37.0px">20</div>
<div class="c" style="left:329.0px;width:46.0px">24</div>
<div class="c" style="left:375.0px;width:44.0px">18</div>
<div class="c" style="left:419.0px;width:77.0px">20</div>
<div class="c" style="left:496.0px;width:91.0px">15</div>
<div class="c" style="left:587.0px;width:58.0px">56,000</div>
<div class="c" style="left:645.0px;width:56.0px">38 902,48</div>
<div class="c" style="left:701.0px;width:56.0px">26 550,38</div>
<div class="c" style="left:757.0px;width:65.0px">3,15</div>
<div class="c" style="left:822.0px;width:100.0px">24 902,5</div>
<div class="c" style="left:922.0px;width:96.0px">2,78</div>
<div class="c" style="left:1018.0px;width:72.0px">12 352,1</div>
<div class="c" style="left:1090.0px;width:71.0px">14 000</div>
<div class="c" style="left:1161.0px;width:51.0px">219,000</div>
</div>
<div class="row r1" style="top:469px">
<div class="c nm" style="left:0;width:216.0px;padding-left:11.2px;letter-spacing:-0.051px;">Футболка мужская SKULL</div>
<div class="c" style="left:216.0px;width:20.0px">14</div>
<div class="c" style="left:236.0px;width:56.0px">14</div>
<div class="c" style="left:292.0px;width:37.0px">19</div>
<div class="c" style="left:329.0px;width:46.0px">19</div>
<div class="c" style="left:375.0px;width:44.0px">44</div>
<div class="c" style="left:419.0px;width:77.0px">18</div>
<div class="c" style="left:496.0px;width:91.0px">21</div>
<div class="c" style="left:587.0px;width:58.0px">52,000</div>
<div class="c" style="left:645.0px;width:56.0px">47 634,28</div>
<div class="c" style="left:701.0px;width:56.0px">47 634,28</div>
<div class="c" style="left:757.0px;width:65.0px"></div>
<div class="c" style="left:822.0px;width:100.0px">29 538,3</div>
<div class="c" style="left:922.0px;width:96.0px">2,63</div>
<div class="c" style="left:1018.0px;width:72.0px"></div>
<div class="c" style="left:1090.0px;width:71.0px">18 096</div>
<div class="c" style="left:1161.0px;width:51.0px">61,000</div>
</div>
<div class="row r2" style="top:479px">
<div class="c nm" style="left:0;width:236.0px;padding-left:20.3px;letter-spacing:-0.253px;">Черный</div>
<div class="c" style="left:236.0px;width:56.0px">14</div>
<div class="c" style="left:292.0px;width:37.0px">19</div>
<div class="c" style="left:329.0px;width:46.0px">19</div>
<div class="c" style="left:375.0px;width:44.0px">44</div>
<div class="c" style="left:419.0px;width:77.0px">18</div>
<div class="c" style="left:496.0px;width:91.0px">21</div>
<div class="c" style="left:587.0px;width:58.0px">52,000</div>
<div class="c" style="left:645.0px;width:56.0px">47 634,28</div>
<div class="c" style="left:701.0px;width:56.0px">47 634,28</div>
<div class="c" style="left:757.0px;width:65.0px"></div>
<div class="c" style="left:822.0px;width:100.0px">29 538,3</div>
<div class="c" style="left:922.0px;width:96.0px">2,63</div>
<div class="c" style="left:1018.0px;width:72.0px"></div>
<div class="c" style="left:1090.0px;width:71.0px">18 096</div>
<div class="c" style="left:1161.0px;width:51.0px">61,000</div>
</div>
<div class="row r1" style="top:489px">
<div class="c nm" style="left:0;width:216.0px;padding-left:11.2px;letter-spacing:0.143px;">Шапка унисекс Автомат</div>
<div class="c" style="left:216.0px;width:20.0px">15</div>
<div class="c" style="left:236.0px;width:56.0px">15</div>
<div class="c" style="left:292.0px;width:37.0px">23</div>
<div class="c" style="left:329.0px;width:46.0px">21</div>
<div class="c" style="left:375.0px;width:44.0px">1</div>
<div class="c" style="left:419.0px;width:77.0px">22</div>
<div class="c" style="left:496.0px;width:91.0px">30</div>
<div class="c" style="left:587.0px;width:58.0px">50,000</div>
<div class="c" style="left:645.0px;width:56.0px">35 183,80</div>
<div class="c" style="left:701.0px;width:56.0px">35 183,78</div>
<div class="c" style="left:757.0px;width:65.0px">1 759 190,00</div>
<div class="c" style="left:822.0px;width:100.0px">20 533,8</div>
<div class="c" style="left:922.0px;width:96.0px">2,40</div>
<div class="c" style="left:1018.0px;width:72.0px">0,02</div>
<div class="c" style="left:1090.0px;width:71.0px">14 650</div>
<div class="c" style="left:1161.0px;width:51.0px">20,000</div>
</div>
<div class="row r2" style="top:499px">
<div class="c nm" style="left:0;width:236.0px;padding-left:20.3px;letter-spacing:-0.253px;">Черный</div>
<div class="c" style="left:236.0px;width:56.0px">15</div>
<div class="c" style="left:292.0px;width:37.0px">23</div>
<div class="c" style="left:329.0px;width:46.0px">21</div>
<div class="c" style="left:375.0px;width:44.0px">1</div>
<div class="c" style="left:419.0px;width:77.0px">22</div>
<div class="c" style="left:496.0px;width:91.0px">30</div>
<div class="c" style="left:587.0px;width:58.0px">50,000</div>
<div class="c" style="left:645.0px;width:56.0px">35 183,80</div>
<div class="c" style="left:701.0px;width:56.0px">35 183,78</div>
<div class="c" style="left:757.0px;width:65.0px">1 759 190,00</div>
<div class="c" style="left:822.0px;width:100.0px">20 533,8</div>
<div class="c" style="left:922.0px;width:96.0px">2,40</div>
<div class="c" style="left:1018.0px;width:72.0px">0,02</div>
<div class="c" style="left:1090.0px;width:71.0px">14 650</div>
<div class="c" style="left:1161.0px;width:51.0px">20,000</div>
</div>
<div class="row r1" style="top:509px">
<div class="c nm" style="left:0;width:216.0px;padding-left:11.2px;letter-spacing:0.148px;">Костюм спортивный мужской хомут Stars</div>
<div class="c" style="left:216.0px;width:20.0px">16</div>
<div class="c" style="left:236.0px;width:56.0px">16</div>
<div class="c" style="left:292.0px;width:37.0px">5</div>
<div class="c" style="left:329.0px;width:46.0px">8</div>
<div class="c" style="left:375.0px;width:44.0px">13</div>
<div class="c" style="left:419.0px;width:77.0px">5</div>
<div class="c" style="left:496.0px;width:91.0px">40</div>
<div class="c" style="left:587.0px;width:58.0px">49,000</div>
<div class="c" style="left:645.0px;width:56.0px">170 176,52</div>
<div class="c" style="left:701.0px;width:56.0px">134 263,31</div>
<div class="c" style="left:757.0px;width:65.0px">4,74</div>
<div class="c" style="left:822.0px;width:100.0px">91 874,5</div>
<div class="c" style="left:922.0px;width:96.0px">2,17</div>
<div class="c" style="left:1018.0px;width:72.0px">35 913,21</div>
<div class="c" style="left:1090.0px;width:71.0px">78 302</div>
<div class="c" style="left:1161.0px;width:51.0px">61,000</div>
</div>
<div class="row r2" style="top:519px">
<div class="c nm" style="left:0;width:236.0px;padding-left:20.3px;letter-spacing:-0.253px;">Черный</div>
<div class="c" style="left:236.0px;width:56.0px">16</div>
<div class="c" style="left:292.0px;width:37.0px">5</div>
<div class="c" style="left:329.0px;width:46.0px">8</div>
<div class="c" style="left:375.0px;width:44.0px">13</div>
<div class="c" style="left:419.0px;width:77.0px">5</div>
<div class="c" style="left:496.0px;width:91.0px">40</div>
<div class="c" style="left:587.0px;width:58.0px">49,000</div>
<div class="c" style="left:645.0px;width:56.0px">170 176,52</div>
<div class="c" style="left:701.0px;width:56.0px">134 263,31</div>
<div class="c" style="left:757.0px;width:65.0px">4,74</div>
<div class="c" style="left:822.0px;width:100.0px">91 874,5</div>
<div class="c" style="left:922.0px;width:96.0px">2,17</div>
<div class="c" style="left:1018.0px;width:72.0px">35 913,21</div>
<div class="c" style="left:1090.0px;width:71.0px">78 302</div>
<div class="c" style="left:1161.0px;width:51.0px">61,000</div>
</div>
<div class="row r1" style="top:529px">
<div class="c nm" style="left:0;width:216.0px;padding-left:11.2px;letter-spacing:-0.006px;">Шапка унисекс 13</div>
<div class="c" style="left:216.0px;width:20.0px">17</div>
<div class="c" style="left:236.0px;width:56.0px">17</div>
<div class="c" style="left:292.0px;width:37.0px">24</div>
<div class="c" style="left:329.0px;width:46.0px">25</div>
<div class="c" style="left:375.0px;width:44.0px">19</div>
<div class="c" style="left:419.0px;width:77.0px">21</div>
<div class="c" style="left:496.0px;width:91.0px">9</div>
<div class="c" style="left:587.0px;width:58.0px">48,000</div>
<div class="c" style="left:645.0px;width:56.0px">34 535,90</div>
<div class="c" style="left:701.0px;width:56.0px">23 502,51</div>
<div class="c" style="left:757.0px;width:65.0px">3,13</div>
<div class="c" style="left:822.0px;width:100.0px">23 015,9</div>
<div class="c" style="left:922.0px;width:96.0px">3,00</div>
<div class="c" style="left:1018.0px;width:72.0px">11 033,39</div>
<div class="c" style="left:1090.0px;width:71.0px">11 520</div>
<div class="c" style="left:1161.0px;width:51.0px">618,000</div>
</div>
<div class="row r2" style="top:539px">
<div class="c nm" style="left:0;width:236.0px;padding-left:20.3px;letter-spacing:0.060px;">Красный</div>
<div class="c" style="left:236.0px;width:56.0px">17</div>
<div class="c" style="left:292.0px;width:37.0px">24</div>
<div class="c" style="left:329.0px;width:46.0px">25</div>
<div class="c" style="left:375.0px;width:44.0px">19</div>
<div class="c" style="left:419.0px;width:77.0px">21</div>
<div class="c" style="left:496.0px;width:91.0px">9</div>
<div class="c" style="left:587.0px;width:58.0px">48,000</div>
<div class="c" style="left:645.0px;width:56.0px">34 535,90</div>
<div class="c" style="left:701.0px;width:56.0px">23 502,51</div>
<div class="c" style="left:757.0px;width:65.0px">3,13</div>
<div class="c" style="left:822.0px;width:100.0px">23 015,9</div>
<div class="c" style="left:922.0px;width:96.0px">3,00</div>
<div class="c" style="left:1018.0px;width:72.0px">11 033,39</div>
<div class="c" style="left:1090.0px;width:71.0px">11 520</div>
<div class="c" style="left:1161.0px;width:51.0px">618,000</div>
</div>
<div class="row r1" style="top:549px">
<div class="c nm" style="left:0;width:216.0px;padding-left:11.2px;letter-spacing:0.072px;">Костюм спортивный женский BS Logos</div>
<div class="c" style="left:216.0px;width:20.0px">18</div>
<div class="c" style="left:236.0px;width:56.0px">18</div>
<div class="c" style="left:292.0px;width:37.0px">6</div>
<div class="c" style="left:329.0px;width:46.0px">6</div>
<div class="c" style="left:375.0px;width:44.0px">7</div>
<div class="c" style="left:419.0px;width:77.0px">6</div>
<div class="c" style="left:496.0px;width:91.0px">43</div>
<div class="c" style="left:587.0px;width:58.0px">47,000</div>
<div class="c" style="left:645.0px;width:56.0px">158 757,21</div>
<div class="c" style="left:701.0px;width:56.0px">140 897,21</div>
<div class="c" style="left:757.0px;width:65.0px">8,89</div>
<div class="c" style="left:822.0px;width:100.0px">83 698,2</div>
<div class="c" style="left:922.0px;width:96.0px">2,12</div>
<div class="c" style="left:1018.0px;width:72.0px">17 860</div>
<div class="c" style="left:1090.0px;width:71.0px">75 059</div>
<div class="c" style="left:1161.0px;width:51.0px">76,000</div>
</div>
<div class="row r2" style="top:559px">
<div class="c nm" style="left:0;width:236.0px;padding-left:20.3px;letter-spacing:-0.234px;">Серый</div>
<div class="c" style="left:236.0px;width:56.0px">18</div>
<div class="c" style="left:292.0px;width:37.0px">6</div>
<div class="c" style="left:329.0px;width:46.0px">6</div>
<div class="c" style="left:375.0px;width:44.0px">7</div>
<div class="c" style="left:419.0px;width:77.0px">6</div>
<div class="c" style="left:496.0px;width:91.0px">43</div>
<div class="c" style="left:587.0px;width:58.0px">47,000</div>
<div class="c" style="left:645.0px;width:56.0px">158 757,21</div>
<div class="c" style="left:701.0px;width:56.0px">140 897,21</div>
<div class="c" style="left:757.0px;width:65.0px">8,89</div>
<div class="c" style="left:822.0px;width:100.0px">83 698,2</div>
<div class="c" style="left:922.0px;width:96.0px">2,12</div>
<div class="c" style="left:1018.0px;width:72.0px">17 860</div>
<div class="c" style="left:1090.0px;width:71.0px">75 059</div>
<div class="c" style="left:1161.0px;width:51.0px">76,000</div>
</div>
<div class="row r1" style="top:569px">
<div class="c nm" style="left:0;width:216.0px;padding-left:11.2px;letter-spacing:0.071px;">Костюм спортивный мужской BS logos</div>
<div class="c" style="left:216.0px;width:20.0px">19</div>
<div class="c" style="left:236.0px;width:56.0px">19</div>
<div class="c" style="left:292.0px;width:37.0px">7</div>
<div class="c" style="left:329.0px;width:46.0px">10</div>
<div class="c" style="left:375.0px;width:44.0px">12</div>
<div class="c" style="left:419.0px;width:77.0px">7</div>
<div class="c" style="left:496.0px;width:91.0px">59</div>
<div class="c" style="left:587.0px;width:58.0px">46,000</div>
<div class="c" style="left:645.0px;width:56.0px">153 057,21</div>
<div class="c" style="left:701.0px;width:56.0px">123 661,92</div>
<div class="c" style="left:757.0px;width:65.0px">5,21</div>
<div class="c" style="left:822.0px;width:100.0px">69 521,2</div>
<div class="c" style="left:922.0px;width:96.0px">1,83</div>
<div class="c" style="left:1018.0px;width:72.0px">29 395,29</div>
<div class="c" style="left:1090.0px;width:71.0px">83 536</div>
<div class="c" style="left:1161.0px;width:51.0px">227,000</div>
</div>
<div class="row r2" style="top:579px">
<div class="c nm" style="left:0;width:236.0px;padding-left:20.3px;letter-spacing:-0.234px;">Серый</div>
<div class="c" style="left:236.0px;width:56.0px">19</div>
<div class="c" style="left:292.0px;width:37.0px">7</div>
<div class="c" style="left:329.0px;width:46.0px">10</div>
<div class="c" style="left:375.0px;width:44.0px">12</div>
<div class="c" style="left:419.0px;width:77.0px">7</div>
<div class="c" style="left:496.0px;width:91.0px">59</div>
<div class="c" style="left:587.0px;width:58.0px">46,000</div>
<div class="c" style="left:645.0px;width:56.0px">153 057,21</div>
<div class="c" style="left:701.0px;width:56.0px">123 661,92</div>
<div class="c" style="left:757.0px;width:65.0px">5,21</div>
<div class="c" style="left:822.0px;width:100.0px">69 521,2</div>
<div class="c" style="left:922.0px;width:96.0px">1,83</div>
<div class="c" style="left:1018.0px;width:72.0px">29 395,29</div>
<div class="c" style="left:1090.0px;width:71.0px">83 536</div>
<div class="c" style="left:1161.0px;width:51.0px">227,000</div>
</div>
<div class="row r1" style="top:589px">
<div class="c nm" style="left:0;width:216.0px;padding-left:11.2px;letter-spacing:-0.044px;">Футболка мужская АВТОМАТ РОССИЯ</div>
<div class="c" style="left:216.0px;width:20.0px">19</div>
<div class="c" style="left:236.0px;width:56.0px">19</div>
<div class="c" style="left:292.0px;width:37.0px">14</div>
<div class="c" style="left:329.0px;width:46.0px">15</div>
<div class="c" style="left:375.0px;width:44.0px">44</div>
<div class="c" style="left:419.0px;width:77.0px">17</div>
<div class="c" style="left:496.0px;width:91.0px">49</div>
<div class="c" style="left:587.0px;width:58.0px">46,000</div>
<div class="c" style="left:645.0px;width:56.0px">68 021,70</div>
<div class="c" style="left:701.0px;width:56.0px">68 021,7</div>
<div class="c" style="left:757.0px;width:65.0px"></div>
<div class="c" style="left:822.0px;width:100.0px">34 763,7</div>
<div class="c" style="left:922.0px;width:96.0px">2,05</div>
<div class="c" style="left:1018.0px;width:72.0px"></div>
<div class="c" style="left:1090.0px;width:71.0px">33 258</div>
<div class="c" style="left:1161.0px;width:51.0px">326,000</div>
</div>
<div class="row r2" style="top:599px">
<div class="c nm" style="left:0;width:236.0px;padding-left:20.3px;letter-spacing:-0.129px;">Белый</div>
<div class="c" style="left:236.0px;width:56.0px">19</div>
<div class="c" style="left:292.0px;width:37.0px">14</div>
<div class="c" style="left:329.0px;width:46.0px">15</div>
<div class="c" style="left:375.0px;width:44.0px">44</div>
<div class="c" style="left:419.0px;width:77.0px">17</div>
<div class="c" style="left:496.0px;width:91.0px">49</div>
<div class="c" style="left:587.0px;width:58.0px">46,000</div>
<div class="c" style="left:645.0px;width:56.0px">68 021,70</div>
<div class="c" style="left:701.0px;width:56.0px">68 021,7</div>
<div class="c" style="left:757.0px;width:65.0px"></div>
<div class="c" style="left:822.0px;width:100.0px">34 763,7</div>
<div class="c" style="left:922.0px;width:96.0px">2,05</div>
<div class="c" style="left:1018.0px;width:72.0px"></div>
<div class="c" style="left:1090.0px;width:71.0px">33 258</div>
<div class="c" style="left:1161.0px;width:51.0px">326,000</div>
</div>
<div class="row r1" style="top:609px">
<div class="c nm" style="left:0;width:216.0px;padding-left:11.2px;letter-spacing:0.078px;">Костюм спортивный женский BS13</div>
<div class="c" style="left:216.0px;width:20.0px">21</div>
<div class="c" style="left:236.0px;width:56.0px">21</div>
<div class="c" style="left:292.0px;width:37.0px">9</div>
<div class="c" style="left:329.0px;width:46.0px">7</div>
<div class="c" style="left:375.0px;width:44.0px">44</div>
<div class="c" style="left:419.0px;width:77.0px">9</div>
<div class="c" style="left:496.0px;width:91.0px">48</div>
<div class="c" style="left:587.0px;width:58.0px">45,000</div>
<div class="c" style="left:645.0px;width:56.0px">134 366,70</div>
<div class="c" style="left:701.0px;width:56.0px">134 366,7</div>
<div class="c" style="left:757.0px;width:65.0px"></div>
<div class="c" style="left:822.0px;width:100.0px">68 801,7</div>
<div class="c" style="left:922.0px;width:96.0px">2,05</div>
<div class="c" style="left:1018.0px;width:72.0px"></div>
<div class="c" style="left:1090.0px;width:71.0px">65 565</div>
<div class="c" style="left:1161.0px;width:51.0px">115,000</div>
</div>
<div class="row r2" style="top:619px">
<div class="c nm" style="left:0;width:236.0px;padding-left:20.3px;letter-spacing:-0.253px;">Черный</div>
<div class="c" style="left:236.0px;width:56.0px">21</div>
<div class="c" style="left:292.0px;width:37.0px">9</div>
<div class="c" style="left:329.0px;width:46.0px">7</div>
<div class="c" style="left:375.0px;width:44.0px">44</div>
<div class="c" style="left:419.0px;width:77.0px">9</div>
<div class="c" style="left:496.0px;width:91.0px">48</div>
<div class="c" style="left:587.0px;width:58.0px">45,000</div>
<div class="c" style="left:645.0px;width:56.0px">134 366,70</div>
<div class="c" style="left:701.0px;width:56.0px">134 366,7</div>
<div class="c" style="left:757.0px;width:65.0px"></div>
<div class="c" style="left:822.0px;width:100.0px">68 801,7</div>
<div class="c" style="left:922.0px;width:96.0px">2,05</div>
<div class="c" style="left:1018.0px;width:72.0px"></div>
<div class="c" style="left:1090.0px;width:71.0px">65 565</div>
<div class="c" style="left:1161.0px;width:51.0px">115,000</div>
</div>
<div class="row r1" style="top:629px">
<div class="c nm" style="left:0;width:216.0px;padding-left:11.2px;letter-spacing:0.099px;">Костюм спортивный мужской Греция</div>
<div class="c" style="left:216.0px;width:20.0px">22</div>
<div class="c" style="left:236.0px;width:56.0px">22</div>
<div class="c" style="left:292.0px;width:37.0px">8</div>
<div class="c" style="left:329.0px;width:46.0px">5</div>
<div class="c" style="left:375.0px;width:44.0px">44</div>
<div class="c" style="left:419.0px;width:77.0px">10</div>
<div class="c" style="left:496.0px;width:91.0px">60</div>
<div class="c" style="left:587.0px;width:58.0px">43,000</div>
<div class="c" style="left:645.0px;width:56.0px">149 862,88</div>
<div class="c" style="left:701.0px;width:56.0px">149 862,88</div>
<div class="c" style="left:757.0px;width:65.0px"></div>
<div class="c" style="left:822.0px;width:100.0px">67 818,9</div>
<div class="c" style="left:922.0px;width:96.0px">1,83</div>
<div class="c" style="left:1018.0px;width:72.0px"></div>
<div class="c" style="left:1090.0px;width:71.0px">82 044</div>
<div class="c" style="left:1161.0px;width:51.0px">43,000</div>
</div>
<svg class="abs" style="left:0;top:0" width="40" height="648" viewBox="0 0 40 648"><path d="M15.7 187.3V648" stroke="#ddd6b6" stroke-width="1" fill="none"/>
<rect x="12.5" y="181.2" width="7.2" height="6.3" rx="1.3" fill="#fffef8" stroke="#cbc39c" stroke-width="0.9"/><path d="M13.6 184.3h5" stroke="#6f6240" stroke-width="0.9"/>
<path d="M24.5 197.3V208.8H27.2" stroke="#d6cfac" stroke-width="1" fill="none"/>
<rect x="21.2" y="191.2" width="7.2" height="6.3" rx="1.3" fill="#fffef8" stroke="#cbc39c" stroke-width="0.9"/><path d="M22.3 194.3h5" stroke="#6f6240" stroke-width="0.9"/>
<path d="M24.5 217.3V228.8H27.2" stroke="#d6cfac" stroke-width="1" fill="none"/>
<rect x="21.2" y="211.2" width="7.2" height="6.3" rx="1.3" fill="#fffef8" stroke="#cbc39c" stroke-width="0.9"/><path d="M22.3 214.3h5" stroke="#6f6240" stroke-width="0.9"/>
<path d="M24.5 237.3V248.8H27.2" stroke="#d6cfac" stroke-width="1" fill="none"/>
<rect x="21.2" y="231.2" width="7.2" height="6.3" rx="1.3" fill="#fffef8" stroke="#cbc39c" stroke-width="0.9"/><path d="M22.3 234.3h5" stroke="#6f6240" stroke-width="0.9"/>
<path d="M24.5 257.3V268.8H27.2" stroke="#d6cfac" stroke-width="1" fill="none"/>
<rect x="21.2" y="251.2" width="7.2" height="6.3" rx="1.3" fill="#fffef8" stroke="#cbc39c" stroke-width="0.9"/><path d="M22.3 254.3h5" stroke="#6f6240" stroke-width="0.9"/>
<path d="M24.5 277.3V288.8H27.2" stroke="#d6cfac" stroke-width="1" fill="none"/>
<rect x="21.2" y="271.2" width="7.2" height="6.3" rx="1.3" fill="#fffef8" stroke="#cbc39c" stroke-width="0.9"/><path d="M22.3 274.3h5" stroke="#6f6240" stroke-width="0.9"/>
<path d="M24.5 297.3V328.8H27.2" stroke="#d6cfac" stroke-width="1" fill="none"/>
<rect x="21.2" y="291.2" width="7.2" height="6.3" rx="1.3" fill="#fffef8" stroke="#cbc39c" stroke-width="0.9"/><path d="M22.3 294.3h5" stroke="#6f6240" stroke-width="0.9"/>
<path d="M24.5 337.3V348.8H27.2" stroke="#d6cfac" stroke-width="1" fill="none"/>
<rect x="21.2" y="331.2" width="7.2" height="6.3" rx="1.3" fill="#fffef8" stroke="#cbc39c" stroke-width="0.9"/><path d="M22.3 334.3h5" stroke="#6f6240" stroke-width="0.9"/>
<path d="M24.5 357.3V368.8H27.2" stroke="#d6cfac" stroke-width="1" fill="none"/>
<rect x="21.2" y="351.2" width="7.2" height="6.3" rx="1.3" fill="#fffef8" stroke="#cbc39c" stroke-width="0.9"/><path d="M22.3 354.3h5" stroke="#6f6240" stroke-width="0.9"/>
<path d="M24.5 377.3V388.8H27.2" stroke="#d6cfac" stroke-width="1" fill="none"/>
<rect x="21.2" y="371.2" width="7.2" height="6.3" rx="1.3" fill="#fffef8" stroke="#cbc39c" stroke-width="0.9"/><path d="M22.3 374.3h5" stroke="#6f6240" stroke-width="0.9"/>
<path d="M24.5 397.3V408.8H27.2" stroke="#d6cfac" stroke-width="1" fill="none"/>
<rect x="21.2" y="391.2" width="7.2" height="6.3" rx="1.3" fill="#fffef8" stroke="#cbc39c" stroke-width="0.9"/><path d="M22.3 394.3h5" stroke="#6f6240" stroke-width="0.9"/>
<path d="M24.5 417.3V428.8H27.2" stroke="#d6cfac" stroke-width="1" fill="none"/>
<rect x="21.2" y="411.2" width="7.2" height="6.3" rx="1.3" fill="#fffef8" stroke="#cbc39c" stroke-width="0.9"/><path d="M22.3 414.3h5" stroke="#6f6240" stroke-width="0.9"/>
<path d="M24.5 437.3V447.8H27.2" stroke="#d6cfac" stroke-width="1" fill="none"/>
<rect x="21.2" y="431.2" width="7.2" height="6.3" rx="1.3" fill="#fffef8" stroke="#cbc39c" stroke-width="0.9"/><path d="M22.3 434.3h5" stroke="#6f6240" stroke-width="0.9"/>
<path d="M24.5 456.3V467.8H27.2" stroke="#d6cfac" stroke-width="1" fill="none"/>
<rect x="21.2" y="450.2" width="7.2" height="6.3" rx="1.3" fill="#fffef8" stroke="#cbc39c" stroke-width="0.9"/><path d="M22.3 453.3h5" stroke="#6f6240" stroke-width="0.9"/>
<path d="M24.5 476.3V487.8H27.2" stroke="#d6cfac" stroke-width="1" fill="none"/>
<rect x="21.2" y="470.2" width="7.2" height="6.3" rx="1.3" fill="#fffef8" stroke="#cbc39c" stroke-width="0.9"/><path d="M22.3 473.3h5" stroke="#6f6240" stroke-width="0.9"/>
<path d="M24.5 496.3V507.8H27.2" stroke="#d6cfac" stroke-width="1" fill="none"/>
<rect x="21.2" y="490.2" width="7.2" height="6.3" rx="1.3" fill="#fffef8" stroke="#cbc39c" stroke-width="0.9"/><path d="M22.3 493.3h5" stroke="#6f6240" stroke-width="0.9"/>
<path d="M24.5 516.3V527.8H27.2" stroke="#d6cfac" stroke-width="1" fill="none"/>
<rect x="21.2" y="510.2" width="7.2" height="6.3" rx="1.3" fill="#fffef8" stroke="#cbc39c" stroke-width="0.9"/><path d="M22.3 513.3h5" stroke="#6f6240" stroke-width="0.9"/>
<path d="M24.5 536.3V547.8H27.2" stroke="#d6cfac" stroke-width="1" fill="none"/>
<rect x="21.2" y="530.2" width="7.2" height="6.3" rx="1.3" fill="#fffef8" stroke="#cbc39c" stroke-width="0.9"/><path d="M22.3 533.3h5" stroke="#6f6240" stroke-width="0.9"/>
<path d="M24.5 556.3V567.8H27.2" stroke="#d6cfac" stroke-width="1" fill="none"/>
<rect x="21.2" y="550.2" width="7.2" height="6.3" rx="1.3" fill="#fffef8" stroke="#cbc39c" stroke-width="0.9"/><path d="M22.3 553.3h5" stroke="#6f6240" stroke-width="0.9"/>
<path d="M24.5 576.3V587.8H27.2" stroke="#d6cfac" stroke-width="1" fill="none"/>
<rect x="21.2" y="570.2" width="7.2" height="6.3" rx="1.3" fill="#fffef8" stroke="#cbc39c" stroke-width="0.9"/><path d="M22.3 573.3h5" stroke="#6f6240" stroke-width="0.9"/>
<path d="M24.5 596.3V607.8H27.2" stroke="#d6cfac" stroke-width="1" fill="none"/>
<rect x="21.2" y="590.2" width="7.2" height="6.3" rx="1.3" fill="#fffef8" stroke="#cbc39c" stroke-width="0.9"/><path d="M22.3 593.3h5" stroke="#6f6240" stroke-width="0.9"/>
<path d="M24.5 616.3V627.8H27.2" stroke="#d6cfac" stroke-width="1" fill="none"/>
<rect x="21.2" y="610.2" width="7.2" height="6.3" rx="1.3" fill="#fffef8" stroke="#cbc39c" stroke-width="0.9"/><path d="M22.3 613.3h5" stroke="#6f6240" stroke-width="0.9"/>
<path d="M24.5 636.3V648" stroke="#d6cfac" stroke-width="1" fill="none"/>
<rect x="21.2" y="630.2" width="7.2" height="6.3" rx="1.3" fill="#fffef8" stroke="#cbc39c" stroke-width="0.9"/><path d="M22.3 633.3h5" stroke="#6f6240" stroke-width="0.9"/></svg>

<!-- scrollbars -->
<div class="ln" style="left:1250px;top:179px;width:7px;background:#e0dabc"></div>
<div id="vs"></div>
<div class="sb v" style="left:1256.4px;top:72.3px;width:10.6px;height:14px"></div>
<div class="tri" style="left:1259.2px;top:77px;border-left:2.5px solid transparent;border-right:2.5px solid transparent;border-bottom:3.4px solid #cfc8a6"></div>
<div class="sb v" style="left:1256.4px;top:86.3px;width:10.6px;height:24px"></div>
<div class="abs" style="left:1260.6px;top:97px;width:2px;height:2px;border-left:1px solid #c4bc94;border-top:1px solid #c4bc94"></div>
<div class="sb v" style="left:1256.4px;top:625.5px;width:10.6px;height:13.4px"></div>
<div class="tri" style="left:1259.2px;top:630.6px;border-left:2.5px solid transparent;border-right:2.5px solid transparent;border-top:3.4px solid #8f8c78"></div>
<div id="hs"></div>
<div class="abs" style="left:1256.6px;top:639.2px;width:11px;height:9px;background:#fcfaeb"></div>
<div class="sb h" style="left:9.6px;top:639.2px;width:14px;height:9.5px"></div>
<div class="tri" style="left:14px;top:641.8px;border-top:2.5px solid transparent;border-bottom:2.5px solid transparent;border-right:3.4px solid #cfc8a6"></div>
<div class="sb h" style="left:23.6px;top:639.2px;width:1131px;height:9.5px"></div>
<div class="abs" style="left:588px;top:643px;width:2px;height:2px;border-left:1px solid #c4bc94;border-top:1px solid #c4bc94"></div>
<div class="sb h" style="left:1241.5px;top:639.2px;width:15px;height:9.5px"></div>
<div class="tri" style="left:1247.6px;top:641.8px;border-top:2.5px solid transparent;border-bottom:2.5px solid transparent;border-left:3.4px solid #8f8c78"></div>
</body></html>
